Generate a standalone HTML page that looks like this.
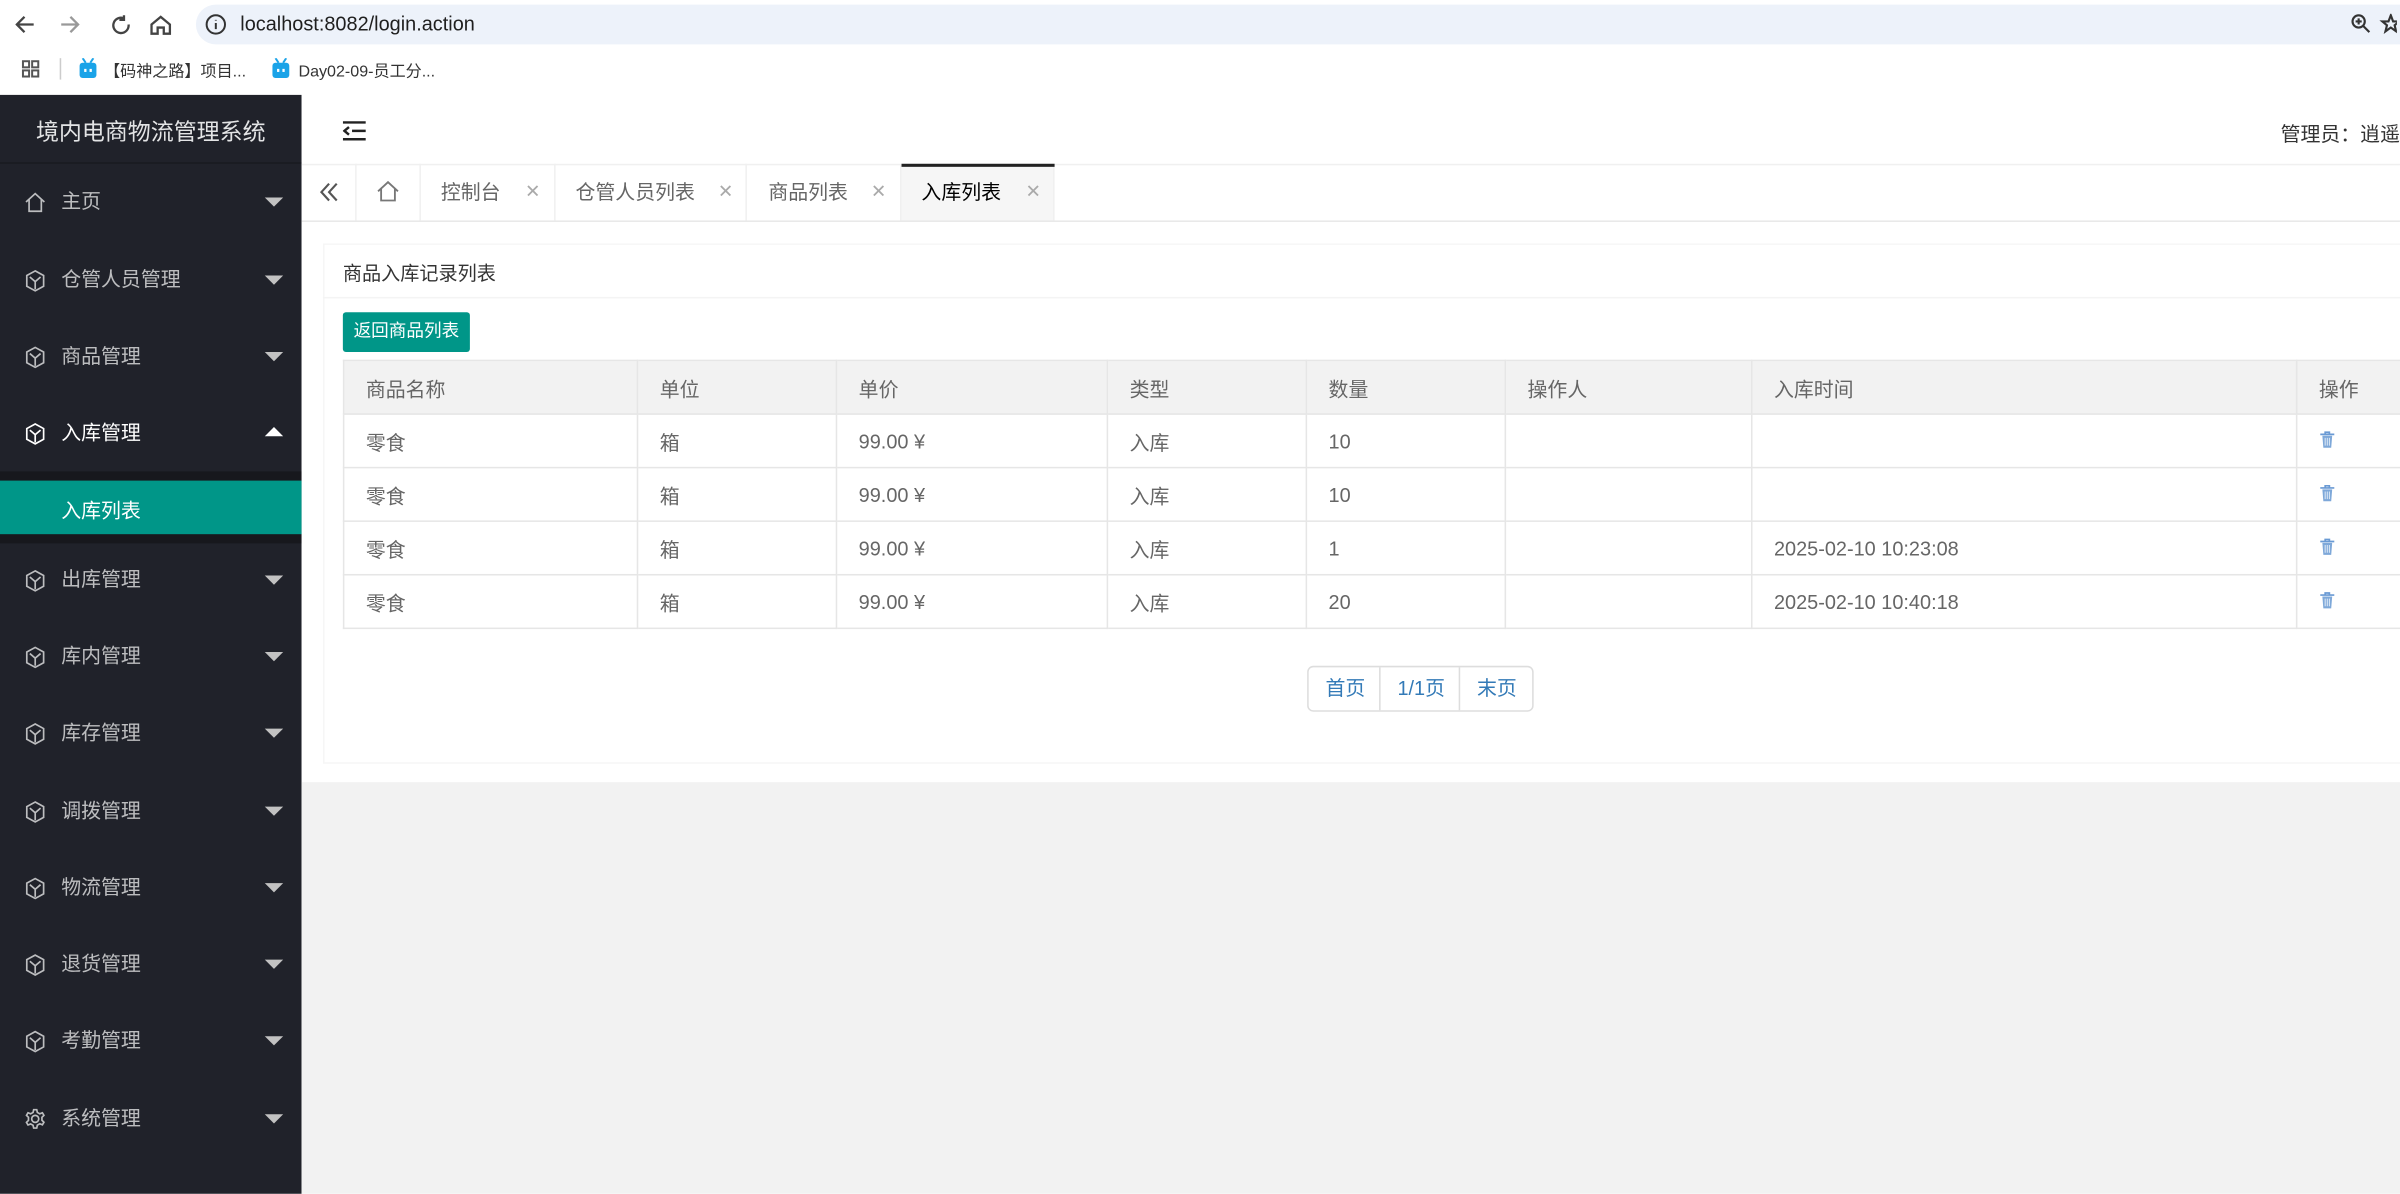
<!DOCTYPE html>
<html><head><meta charset="utf-8"><style>
*{margin:0;padding:0;box-sizing:border-box}
html,body{width:2400px;height:1194px;overflow:hidden;background:#fff}
#w{position:absolute;left:0;top:0;width:1568px;height:780px;transform:scale(1.5306);transform-origin:0 0;font-family:"Liberation Sans","Noto Sans CJK SC",sans-serif;overflow:hidden}
.a{position:absolute}
.side{left:0;top:62px;width:197px;height:718px;background:#20222a}
.mi{position:absolute;left:0;width:197px;height:20px;color:rgba(255,255,255,.7);font-size:13px;line-height:20px}
.mi span{position:absolute;left:40px}
.mi svg{position:absolute;left:16px;top:3px}
.mi i{position:absolute;left:173px;top:7px;width:0;height:0;border-left:6px solid transparent;border-right:6px solid transparent;border-top:6px solid #c2c2c2}
.tab{position:absolute;top:107px;height:37px;border-right:1px solid #f0f0f0;font-size:13px;color:#666;line-height:37px}
.tab b{font-weight:normal;position:absolute;color:#aaa;font-size:12px}
td{border:1px solid #e6e6e6;height:35px;padding:0 14px;font-size:13px;color:#666}
table{border-collapse:collapse;position:absolute;left:224px;top:235px;width:1360px}
tr.h td{background:#f2f2f2}
</style></head><body><div id="w">
<div class="a" style="left:0;top:0;width:1568px;height:31px;background:#fff"></div>
<svg class="a" style="left:10px;top:9px" width="110" height="14" viewBox="0 0 110 14" fill="none" stroke="#444" stroke-width="1.5"><path d="M1 7h11M6 2L1 7l5 5"/><path d="M30 7h11M36 2l5 5-5 5" stroke="#999"/><path d="M71 3a5 5 0 1 0 3 4M71 1v3h-3"/><path d="M89 7l6-5 6 5v6h-4V9h-4v4h-4z"/></svg>
<div class="a" style="left:128px;top:3px;width:1460px;height:26px;border-radius:13px;background:#edf2fa"></div>
<svg class="a" style="left:134px;top:9px" width="14" height="14" viewBox="0 0 14 14" fill="none" stroke="#333" stroke-width="1.3"><circle cx="7" cy="7" r="6"/><path d="M7 6v4M7 4v.5"/></svg>
<div class="a" style="left:157px;top:8px;font-size:13px;color:#1f1f1f">localhost:8082/login.action</div>
<svg class="a" style="left:1536px;top:9px" width="30" height="14" viewBox="0 0 30 14" fill="none" stroke="#333" stroke-width="1.4"><circle cx="5" cy="5" r="4"/><path d="M8 8l4 4M3 5h4M5 3v4"/><path d="M26 1l1.5 4h4l-3 2.5 1 4-3.5-2.5-3.5 2.5 1-4-3-2.5h4z"/></svg>
<svg class="a" style="left:14px;top:39px" width="12" height="12" viewBox="0 0 12 12" fill="none" stroke="#555" stroke-width="1.3"><rect x="1" y="1" width="4" height="4"/><rect x="7" y="1" width="4" height="4"/><rect x="1" y="7" width="4" height="4"/><rect x="7" y="7" width="4" height="4"/></svg>
<div class="a" style="left:39px;top:38px;width:1px;height:14px;background:#ccc"></div>
<svg class="a" style="left:51px;top:38px" width="13" height="14" viewBox="0 0 13 14"><rect x="1" y="3" width="11" height="10" rx="2" fill="#1aa3e8"/><path d="M3 0l2 3M10 0L8 3" stroke="#1aa3e8" stroke-width="1.3"/><rect x="4" y="7" width="1.5" height="2" fill="#fff"/><rect x="7.5" y="7" width="1.5" height="2" fill="#fff"/></svg>
<div class="a" style="left:68px;top:39px;font-size:10.5px;color:#333">【码神之路】项目...</div>
<svg class="a" style="left:177px;top:38px" width="13" height="14" viewBox="0 0 13 14"><rect x="1" y="3" width="11" height="10" rx="2" fill="#1aa3e8"/><path d="M3 0l2 3M10 0L8 3" stroke="#1aa3e8" stroke-width="1.3"/><rect x="4" y="7" width="1.5" height="2" fill="#fff"/><rect x="7.5" y="7" width="1.5" height="2" fill="#fff"/></svg>
<div class="a" style="left:195px;top:39px;font-size:10.5px;color:#333">Day02-09-员工分...</div>
<div class="a side"></div>
<div class="a" style="left:0;top:106px;width:197px;height:1px;background:#191a20"></div>
<div class="a" style="left:0;top:75px;width:197px;text-align:center;color:#fff;font-size:15px;opacity:.88">境内电商物流管理系统</div>
<div class="a" style="left:0;top:308px;width:197px;height:47px;background:#17181d"></div>
<div class="a" style="left:0;top:314px;width:197px;height:35px;background:#009688"></div>
<div class="a" style="left:40px;top:323px;color:#fff;font-size:13px">入库列表</div>
<div id="menu"></div>
<svg class="a" style="left:224px;top:79px" width="15" height="13" viewBox="0 0 15 13" fill="none" stroke="#222" stroke-width="1.6"><path d="M0 1h15M6 6.5h9M0 12h15M4 4L1 6.5 4 9"/></svg>
<div class="a" style="left:1490px;top:77px;font-size:13px;color:#333;white-space:nowrap">管理员：逍遥游</div>
<div class="a" style="left:197px;top:107px;width:1371px;height:1px;background:#f0f0f0"></div>
<div class="tab" style="left:197px;width:36px"><svg class="a" style="left:11px;top:12px" width="14" height="13" viewBox="0 0 14 13" fill="none" stroke="#555" stroke-width="1.4"><path d="M7 1L2 6.5 7 12M12 1L7 6.5 12 12"/></svg></div>
<div class="tab" style="left:233px;width:42px"><svg class="a" style="left:13px;top:11px" width="15" height="14" viewBox="0 0 15 14" fill="none" stroke="#777" stroke-width="1.2"><path d="M1 7L7.5 1 14 7M3 5.5V13h9V5.5"/></svg></div>
<div class="tab" style="left:275px;width:88px"><span class="a" style="left:13px">控制台</span><b style="left:68px">✕</b></div>
<div class="tab" style="left:363px;width:125px"><span class="a" style="left:13px">仓管人员列表</span><b style="left:106px">✕</b></div>
<div class="tab" style="left:488px;width:101px"><span class="a" style="left:14px">商品列表</span><b style="left:81px">✕</b></div>
<div class="tab" style="left:589px;width:100px;background:#f6f6f6;color:#000"><div class="a" style="left:0;top:0;width:100px;height:2px;background:#222"></div><span class="a" style="left:13px">入库列表</span><b style="left:81px">✕</b></div>
<div class="a" style="left:197px;top:144px;width:1371px;height:1px;background:#e8e8e8"></div>
<div class="a" style="left:197px;top:511px;width:1371px;height:269px;background:#f2f2f2"></div>
<div class="a" style="left:211px;top:159px;width:1370px;height:340px;border:1px solid #f6f6f6"></div>
<div class="a" style="left:211px;top:194px;width:1370px;height:1px;background:#f4f4f4"></div>
<div class="a" style="left:224px;top:168px;font-size:12.5px;color:#333">商品入库记录列表</div>
<div class="a" style="left:224px;top:204px;width:83px;height:26px;background:#009688;border-radius:2px;color:#fff;font-size:11.5px;line-height:26px;text-align:center">返回商品列表</div>
<table>
<colgroup><col style="width:192px"><col style="width:130px"><col style="width:177px"><col style="width:130px"><col style="width:130px"><col style="width:161px"><col style="width:356px"><col></colgroup>
<tr class="h"><td>商品名称</td><td>单位</td><td>单价</td><td>类型</td><td>数量</td><td>操作人</td><td>入库时间</td><td>操作</td></tr>
<tr><td>零食</td><td>箱</td><td>99.00 ¥</td><td>入库</td><td>10</td><td></td><td></td><td class="t"></td></tr>
<tr><td>零食</td><td>箱</td><td>99.00 ¥</td><td>入库</td><td>10</td><td></td><td></td><td class="t"></td></tr>
<tr><td>零食</td><td>箱</td><td>99.00 ¥</td><td>入库</td><td>1</td><td></td><td>2025-02-10 10:23:08</td><td class="t"></td></tr>
<tr><td>零食</td><td>箱</td><td>99.00 ¥</td><td>入库</td><td>20</td><td></td><td>2025-02-10 10:40:18</td><td class="t"></td></tr>
</table>
<div class="a" style="left:854px;top:435px;width:148px;height:30px;border:1px solid #ddd;border-radius:4px;font-size:13px;color:#337ab7;line-height:28px">
<span class="a" style="left:11px">首页</span><div class="a" style="left:46px;top:0;width:1px;height:28px;background:#ddd"></div>
<span class="a" style="left:58px">1/1页</span><div class="a" style="left:98px;top:0;width:1px;height:28px;background:#ddd"></div>
<span class="a" style="left:110px">末页</span></div>
</div>
<script>
var items=[["主页",132,"h"],["仓管人员管理",183],["商品管理",233],["入库管理",283,"u"],["出库管理",379],["库内管理",429],["库存管理",479],["调拨管理",530],["物流管理",580],["退货管理",630],["考勤管理",680],["系统管理",731,"g"]];
var cube='<svg width="14" height="15" viewBox="0 0 14 15" fill="none" stroke="currentColor" stroke-width="1.1"><path d="M7 1l5.5 3v7L7 14 1.5 11V4z"/><path d="M3.5 5L7 8l3.5-3M7 8v5"/></svg>';
var home='<svg width="14" height="14" viewBox="0 0 14 14" fill="none" stroke="currentColor" stroke-width="1.1"><path d="M1 7L7 1.5 13 7M3 5.5V13h8V5.5"/></svg>';
var gear='<svg width="14" height="14" viewBox="0 0 14 14" fill="none" stroke="currentColor" stroke-width="1.1"><circle cx="7" cy="7" r="2.3"/><path d="M6 1h2l.4 1.8 1.6.9 1.7-.7 1 1.7-1.3 1.3v1.9l1.3 1.3-1 1.7-1.7-.7-1.6.9L8 13H6l-.4-1.8-1.6-.9-1.7.7-1-1.7L2.6 8V6L1.3 4.7l1-1.7 1.7.7 1.6-.9z"/></svg>';
var h='';
items.forEach(function(it){var ic=it[2]=="h"?home:it[2]=="g"?gear:cube;var up=it[2]=="u";
h+='<div class="mi" style="top:'+(it[1]-10)+'px;'+(up?'color:#fff':'')+'">'+ic+'<span>'+it[0]+'</span><i style="'+(up?'border-top:none;border-bottom:6px solid #fff;top:6px':'')+'"></i></div>';});
document.getElementById('menu').innerHTML=h;
var tr='<svg width="11" height="12" viewBox="0 0 12 13"><path d="M1 3h10M4.5 3V1.5h3V3" stroke="#6a9ad4" stroke-width="1.2" fill="none"/><path d="M2.5 4h7l-.7 8.5H3.2z" fill="#7ea8d9"/><path d="M4.5 5.5v5.5M6 5.5v5.5M7.5 5.5v5.5" stroke="#e2ecf7" stroke-width=".7"/></svg>';
document.querySelectorAll('td.t').forEach(function(t){t.innerHTML=tr;});
</script>
</body></html>
